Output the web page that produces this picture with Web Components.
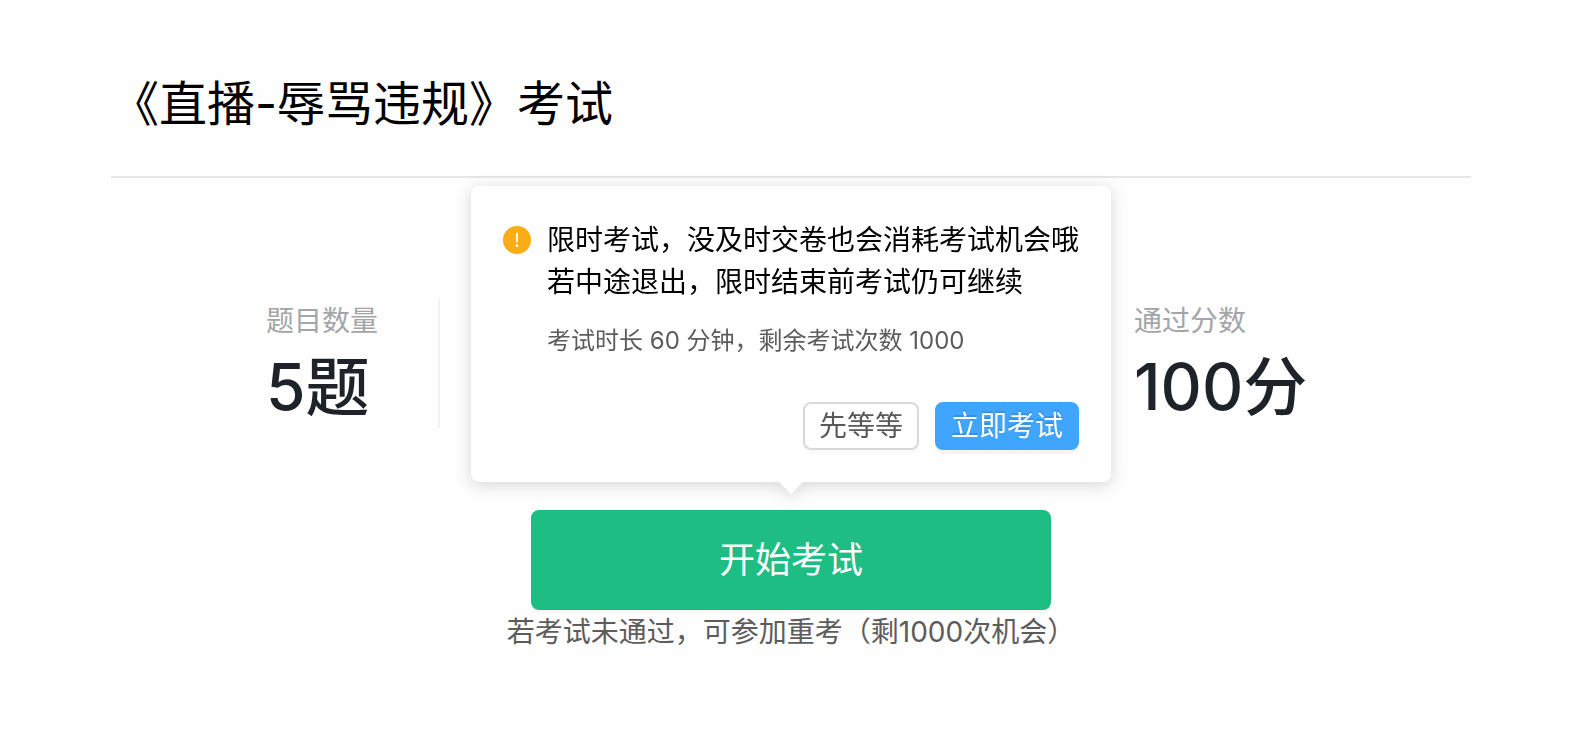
<!DOCTYPE html>
<html lang="zh-CN">
<head>
<meta charset="utf-8">
<meta name="viewport" content="width=device-width, initial-scale=1">
<title>《直播-辱骂违规》考试</title>
<style>
  body { margin: 0; background: #fefefe; font-family: Inter, "Noto Sans CJK SC", sans-serif; color: #000; }
</style>
</head>
<body>
<exam-page>
  <exam-title slot="header">《直播-辱骂违规》考试</exam-title>
  <exam-stats slot="stats">
    <exam-stat label="题目数量" divided>5题</exam-stat>
    <exam-stat label="通过分数">100分</exam-stat>
  </exam-stats>
  <exam-start slot="action">
    <confirm-popover slot="popover">
      <span slot="message">限时考试，没及时交卷也会消耗考试机会哦<br>若中途退出，限时结束前考试仍可继续</span>
      <span slot="description">考试时长 60 分钟，剩余考试次数 1000</span>
      <small-button slot="actions">先等等</small-button>
      <small-button slot="actions" primary>立即考试</small-button>
    </confirm-popover>
    开始考试
    <span slot="note">若考试未通过，可参加重考（剩1000次机会）</span>
  </exam-start>
</exam-page>

<script>
const define = (name, html) => customElements.define(name, class extends HTMLElement {
  connectedCallback() {
    if (this.shadowRoot) return;
    this.attachShadow({ mode: 'open' }).innerHTML = html;
    const label = this.shadowRoot.querySelector('[data-label]');
    if (label) label.textContent = this.getAttribute('label');
  }
});

define('exam-page', `
  <style>
    :host { display: block; padding: 0 113px 0 111px; }
    main { display: flex; flex-direction: column; }
  </style>
  <main>
    <slot name="header"></slot>
    <slot name="stats"></slot>
    <slot name="action"></slot>
  </main>`);

define('exam-title', `
  <style>
    :host { display: block; padding: 72px 0 40px; border-bottom: 2px solid #e6e6e6; }
    h1 { margin: 0; font-size: 48px; line-height: 64px; font-weight: 400; }
  </style>
  <h1><slot></slot></h1>`);

define('exam-stats', `
  <style>
    :host { display: grid; grid-template-columns: 329fr 694fr 337fr; padding: 120px 0 82px; }
    ::slotted(:last-child) { grid-column: 3; }
  </style>
  <slot></slot>`);

define('exam-stat', `
  <style>
    :host { display: block; height: 130px; }
    :host([divided]) { border-right: 2px solid #f3f3f3; padding-left: 155px; }
    dl { margin: 0; }
    dt { font-size: 28px; line-height: 46px; color: #a3a5a8; }
    dd { margin: 0; font-size: 64px; line-height: 86px; font-weight: 500; color: #1d2329; }
  </style>
  <dl><dt data-label></dt><dd><slot></slot></dd></dl>`);

define('exam-start', `
  <style>
    :host { display: flex; flex-direction: column; align-items: center; }
    .anchor { position: relative; width: 520px; max-width: 100%; }
    button { display: block; width: 100%; height: 100px; border: 0; border-radius: 8px; background: #1dbd84; color: #fff;
      font: inherit; font-size: 36px; line-height: 52px; box-shadow: 0 4px 0 rgba(0,0,0,.02); cursor: pointer; }
    p { margin: 0; font-size: 28px; line-height: 44px; color: #5c5c5c; }
    ::slotted(confirm-popover) { position: absolute; left: 50%; bottom: calc(100% + 28px); transform: translateX(-50%); }
  </style>
  <div class="anchor">
    <slot name="popover"></slot>
    <button type="button"><slot></slot></button>
  </div>
  <p><slot name="note"></slot></p>`);

define('confirm-popover', `
  <style>
    :host { display: block; width: 640px; box-sizing: border-box; padding: 32px; border-radius: 8px; background: #fff;
      filter: drop-shadow(0 3px 8px rgba(0,0,0,.16)); }
    .arrow { position: absolute; left: 50%; top: 100%; width: 24px; height: 12px; margin-left: -12px;
      background: #fff; clip-path: polygon(0 0, 100% 0, 50% 100%); }
    .body { display: grid; grid-template-columns: 28px 1fr; column-gap: 16px; }
    svg { width: 28px; height: 28px; margin-top: 8px; }
    .message { padding-top: 1px; font-size: 28px; line-height: 42px; color: #000; white-space: nowrap; }
    .description { grid-column: 2; margin-top: 20px; font-size: 24px; line-height: 36px; color: #5c5c5c; }
    .actions { display: flex; justify-content: flex-end; gap: 16px; margin-top: 43px; }
  </style>
  <div role="dialog" aria-label="考试确认">
    <div class="body">
      <svg viewBox="0 0 28 28" aria-hidden="true">
        <circle cx="14" cy="14" r="14" fill="#faad14"/>
        <path d="M13 7h2l-.2 9.6h-1.6z" fill="#fff"/>
        <circle cx="14" cy="19.7" r="1.4" fill="#fff"/>
      </svg>
      <div class="message"><slot name="message"></slot></div>
      <div class="description"><slot name="description"></slot></div>
    </div>
    <div class="actions"><slot name="actions"></slot></div>
  </div>
  <div class="arrow"></div>`);

define('small-button', `
  <style>
    :host { display: block; }
    button { display: block; height: 48px; box-sizing: border-box; padding: 0 14px; border: 2px solid #d9d9d9; border-radius: 8px;
      background: #fff; color: #595959; font: inherit; font-size: 28px; line-height: 44px;
      box-shadow: 0 4px 0 rgba(0,0,0,.02); cursor: pointer; }
    :host([primary]) button { border-color: #40a5ff; background: #40a5ff; color: #fff;
      text-shadow: 0 -2px 0 rgba(0,0,0,.12); box-shadow: 0 4px 0 rgba(0,0,0,.045); }
  </style>
  <button type="button"><slot></slot></button>`);
</script>
</body>
</html>
